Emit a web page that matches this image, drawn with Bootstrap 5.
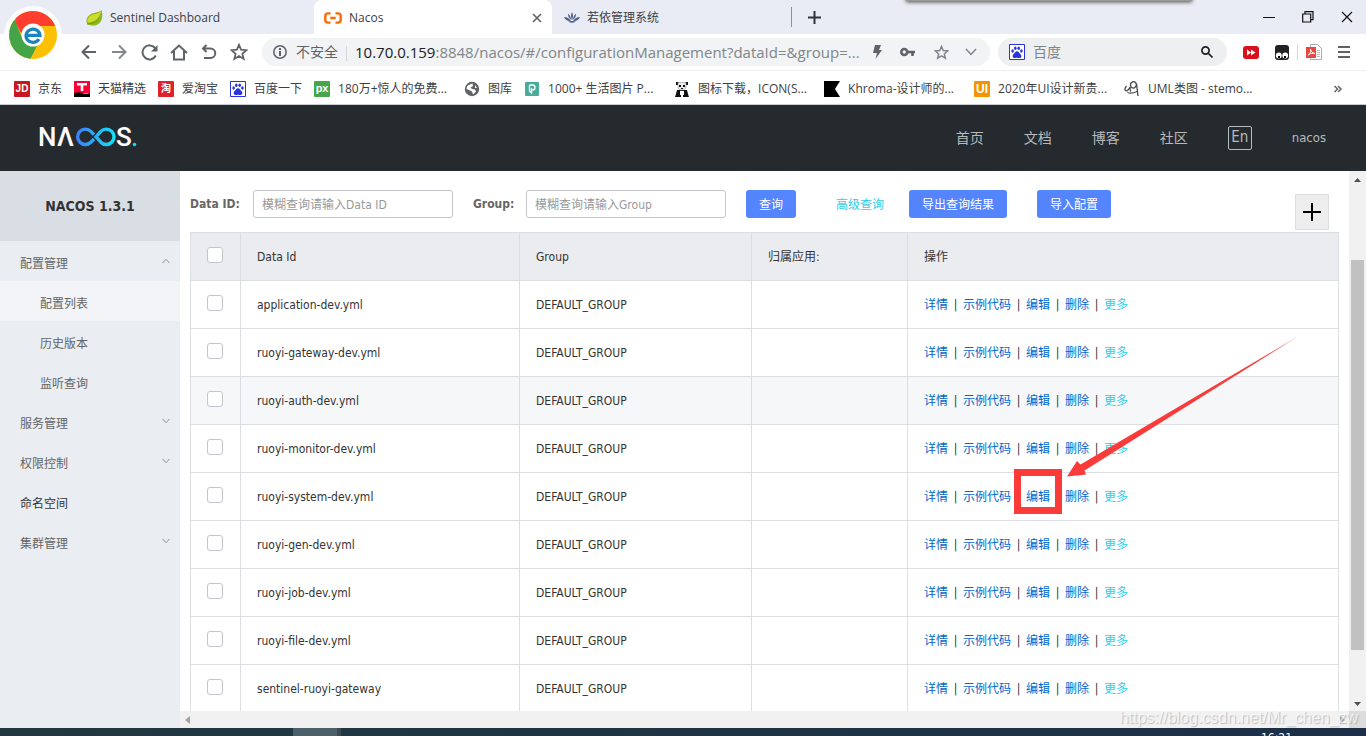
<!DOCTYPE html>
<html lang="zh-CN">
<head>
<meta charset="utf-8">
<meta name="viewport" content="width=device-width, initial-scale=1">
<title>Nacos</title>
<link href="https://cdn.jsdelivr.net/npm/bootstrap@5.3.0/dist/css/bootstrap.min.css" rel="stylesheet">
<style>
  :root { --ui: "Open Sans", "Noto Sans CJK SC", sans-serif; --page: "DejaVu Sans Condensed", "Noto Sans CJK SC", sans-serif; --line: #dcdee3; }
  body { font: 12px/18px var(--page); color: #333; background: #fff; }
  button { border: 0; background: none; padding: 0; color: inherit; }
  a { text-decoration: none; }
  svg { display: block; flex: none; }

  /* browser window */
  .browser { font-family: var(--ui); color: #3c4043; }
  .tabstrip { height: 34px; background: #e9ecf4; padding-left: 66px; }
  .tab { height: 34px; padding: 2px 10px 0 20px; gap: 7px; width: 238px; color: #3c4043; }
  .tab-first { width: 248px; }
  .tab-on { background: #fff; border-radius: 8px 8px 0 0; padding-left: 10px; }
  .tab-next { padding-left: 12px; border-right: 1px solid #8d9096; height: 20px; width: 240px; }
  .winctl { width: 39px; height: 34px; color: #111; }
  .drop { left: 906px; top: -6px; width: 286px; height: 7px; box-shadow: 0 1px 4px #444; background: #999; }
  .brand-disc { left: 4px; top: 6px; }
  .toolbar { height: 37px; padding-left: 74px; border-bottom: 1px solid #eceef1; color: #5f6368; }
  .tool { width: 30px; height: 30px; }
  .pill { height: 28px; border-radius: 14px; background: #f1f3f4; }
  .address { font-size: 15px; color: #80868b; min-width: 0; }
  .address-safe { font-size: 14px; color: #5f6368; }
  .address-host { color: #202124; }
  .websearch { width: 229px; background: #eeeff1; padding: 0 14px 0 7px; }
  .websearch input { background: none; border: 0; outline: 0; font-size: 14px; min-width: 0; padding: 0; }
  .websearch input::placeholder { color: #80868b; }
  .bookmarks { height: 33px; padding: 2px 0 0 14px; }
  .bm { gap: 8px; padding-right: 12px; color: #3c4043; white-space: nowrap; }
  .bm-long { width: 150px; }
  .bm-tile { font: bold 10px/16px "Liberation Sans", "Noto Sans CJK SC", sans-serif; width: 16px; height: 16px; color: #fff; text-align: center; flex: none; border-radius: 1px; }
  .bm-jd { background: #c81623; }
  .bm-tao { background: #e0202c; }
  .bm-px { background: #46a64a; font-size: 11px; line-height: 14px; }
  .bm-ui { background: #f59300; font-size: 12px; }

  /* console */
  .topbar { height: 67px; background: #252a2f; border-top: 1px solid #c9ccd0; padding: 0 40px 0 39px; gap: 40px; }
  .topbar a { color: #b8babc; font-size: 14px; }
  .topbar .user { font-size: 13px; }
  .lang { width: 24px; height: 24px; border: 1px solid #b8babc; border-radius: 2px; color: #b8babc; font-size: 15px; line-height: 18px; padding-bottom: 2px; }
  .sidebar { width: 180px; background: #eaedf1; flex: none; }
  .sidebar h1 { height: 70px; background: #d9dee4; font-size: 14px; font-weight: bold; color: #333; margin: 0; }
  .side-item { height: 40px; padding: 6px 10px 0 20px; color: #656565; width: 100%; }
  .side-sub { padding-left: 40px; }
  .side-on { background: #f2f4f7; }
  .side-plain { color: #333; }
  .chev { margin-bottom: 6px; }

  .content { padding: 19px 10px 0; }
  .query { height: 40px; margin-bottom: 2px; }
  .query label { font-weight: bold; color: #666; }
  .lab-id { width: 63px; }
  .lab-group { width: 53px; margin-left: 20px; }
  .query .form-control { width: 200px; height: 28px; font-size: 12px; line-height: 18px; padding: 2px 8px 0; border: 1px solid #c4c6cf; border-radius: 3px; }
  .query .form-control::placeholder { color: #999; }
  .btn-query { height: 28px; padding: 2px 13px 0; background: #5584ff; color: #fff; border-radius: 3px; font-size: 12px; line-height: 26px; }
  .btn-search { margin-left: 20px; }
  .btn-import { margin-left: 30px; }
  .more { color: #33cde5; }
  .more-query { margin: 2px 25px 0 40px; }
  .add { width: 34px; height: 36px; background: #eee; border: 1px solid #ddd; color: #000; margin-top: 4px; margin-right: 10px; }

  .grid { table-layout: fixed; width: 100%; border-collapse: collapse; }
  .grid th, .grid td { height: 48px; border: 1px solid var(--line); padding: 0 16px; font-weight: normal; white-space: nowrap; }
  .grid th { background: #ebecf0; }
  .grid .tick { text-align: center; padding: 0 2px 0 0; }
  .grid .form-check-input { width: 16px; height: 16px; margin: 0 0 4px; border: 1px solid #c4c6cf; border-radius: 3px; vertical-align: middle; background-color: #fff; }
  .grid .hovered td { background: #f5f7f9; }
  .ops a { color: #06c; }
  .ops .more { color: #33cde5; }
  .ops i { font-style: normal; display: inline-block; width: 15px; text-align: center; }
  .callout { left: 106px; top: -136px; pointer-events: none; z-index: 2; }

  .vbar { width: 17px; background: #f1f1f1; padding: 7px 0 5px; }
  .vthumb { width: 13px; height: 390px; background: #c1c1c1; margin: 78px 0 0 2px; }
  .hbar { height: 17px; background: #f1f1f1; padding: 0 4px 0 5px; }
  .hcorner { width: 17px; background: #dcdcdc; }
  .watermark { right: 8px; bottom: 0; font: 16px/20px "Liberation Sans", sans-serif; color: #ffffffb0; text-shadow: 1px 1px 1px #9999; z-index: 3; }
  .taskbar { height: 8px; background: linear-gradient(90deg, #213840, #1d2f48); color: #fff; }
  .task-on { width: 48px; background: #4d5f68; margin-left: 293px; border-right: 4px solid #3b4a52; }
  .clock { margin-right: 74px; line-height: 20px; height: 8px; }
</style>
</head>
<body class="vh-100 overflow-hidden d-flex flex-column">

<svg width="0" height="0" class="position-absolute">
  <symbol id="paw" viewBox="0 0 16 16"><path fill="#fff" stroke="#2932e1" d="M.5.5h15v15H.5z"/><g fill="#2932e1"><ellipse cx="3.600" cy="7" rx="1.300" ry="1.800"/><ellipse cx="6.300" cy="4.300" rx="1.300" ry="1.800"/><ellipse cx="9.700" cy="4.300" rx="1.300" ry="1.800"/><ellipse cx="12.400" cy="7" rx="1.300" ry="1.800"/><path d="M8 7.200c1.700 0 2.100 1.700 3.400 2.900 1.700 1.700 1 3.900-.9 3.900-1 0-1.500-.3-2.500-.3s-1.500.3-2.500.3c-1.900 0-2.600-2.200-.9-3.900C5.900 8.900 6.300 7.200 8 7.200z"/></g></symbol>
  <symbol id="star" viewBox="0 0 18 18"><path fill="none" stroke="currentColor" stroke-width="1.800" d="m9 1.800 2.100 4.900 5.300.5-4 3.500 1.200 5.200L9 13.100l-4.600 2.800 1.200-5.200-4-3.500 5.300-.5z"/></symbol>
  <symbol id="down" viewBox="0 0 8 8"><path fill="none" stroke="#8a8f99" d="m.5 2 3.500 3.700L7.500 2"/></symbol>
  <symbol id="up" viewBox="0 0 8 8"><path fill="none" stroke="#8a8f99" d="M.5 6 4 2.300 7.500 6"/></symbol>
</svg>

<header class="browser position-relative flex-shrink-0">
  <div class="tabstrip d-flex align-items-center">
    <a href="#" class="tab tab-first d-flex align-items-center">
      <svg width="17" height="16" viewBox="0 0 17 16"><path fill="#8fb81c" d="M15.500 0C14 2.500 9 2 5 4 1 6.300-.5 10 1 13.500c3.500 3 10.500 3 13.500-1.500C17 8 16.500 4 15.500 0z"/><path fill="#cfdc2c" d="M15.300 1C13 4 8 3.500 4.500 5.700 2 7.500.8 10.500 1.700 12.500c6 0 11.300-3 13.600-11.500z"/><path fill="none" stroke="#6f9a14" d="M1 14c5.500 0 10-2 12.500-6.500"/></svg>
      <span>Sentinel Dashboard</span></a>
    <a href="#" class="tab tab-on d-flex align-items-center">
      <svg width="18" height="12" viewBox="0 0 18 12" fill="none" stroke="#ff6a00" stroke-width="2.400"><path d="M6.500 1.400H4Q1.300 1.400 1.300 4v4q0 2.600 2.700 2.600h2.500M11.500 1.400H14q2.700 0 2.700 2.600v4q0 2.600-2.700 2.600h-2.500M6.300 6h5.400" /></svg>
      <span class="flex-grow-1">Nacos</span>
      <button aria-label="关闭标签"><svg width="10" height="10" viewBox="0 0 10 10" stroke="#5f6368" stroke-width="1.600"><path d="m1 1 8 8M9 1 1 9"/></svg></button></a>
    <a href="#" class="tab tab-next d-flex align-items-center">
      <svg width="16" height="12" viewBox="0 0 16 12" fill="#4f6087"><path d="M8 0q2 4 0 8-2-4 0-8zM4 1.500q3 2.500 3.400 6.500Q4 6 4 1.500zM12 1.500Q9 4 8.600 8 12 6 12 1.500zM0 5q4.500 0 7 4-5 .5-7-4zM16 5q-4.500 0-7 4 5 .5 7-4zM4 9.500q4-1 8 0-4 2.500-8 0z"/></svg>
      <span>若依管理系统</span></a>
    <button class="ms-3" aria-label="新建标签"><svg width="13" height="13" viewBox="0 0 13 13" stroke="#303236" stroke-width="2"><path d="M6.500 0v13M0 6.500h13"/></svg></button>
    <div class="ms-auto d-flex">
      <button class="winctl d-grid" aria-label="最小化"><svg class="m-auto" width="12" height="12" stroke="currentColor"><path d="M0 6.500h12"/></svg></button>
      <button class="winctl d-grid" aria-label="还原"><svg class="m-auto" width="12" height="12" fill="none" stroke="currentColor" stroke-width="1.200"><path d="M.7 3h8v8h-8zM3 3V.700h8v8H8.700"/></svg></button>
      <button class="winctl d-grid" aria-label="关闭"><svg class="m-auto" width="12" height="12" stroke="currentColor" stroke-width="1.200"><path d="m1 1 10 10M11 1 1 11"/></svg></button>
    </div>
  </div>
  <div class="drop position-absolute"></div>
  <svg class="brand-disc position-absolute" width="58" height="58" viewBox="-29 -29 58 58"><circle r="29" fill="#fbfcfe"/><circle r="24" fill="#fcc004"/><path fill="#ff3e30" d="M-17.500-16.500A24 24 0 0 1 22.200-9H0L-12-2-18-13z"/><path fill="#44a447" d="M-18.500-15.200A24 24 0 0 0-2.500 23.800L4 11 0 8-10 5z"/><circle r="11.500" fill="#fff"/><path fill="none" stroke="#1b84bd" stroke-width="3.200" d="M-6.500.3H7A7 6.600 0 1 0 6 4.200"/></svg>

  <div class="toolbar d-flex align-items-center">
    <button class="tool d-grid" aria-label="后退"><svg class="m-auto" width="16" height="16" fill="none" stroke="currentColor" stroke-width="2"><path d="M15 8H2M8 1.500 1.500 8 8 14.500"/></svg></button>
    <button class="tool d-grid" aria-label="前进"><svg class="m-auto" width="16" height="16" fill="none" stroke="#85888c" stroke-width="2"><path d="M1 8h13M8 1.500 14.500 8 8 14.500"/></svg></button>
    <button class="tool d-grid" aria-label="刷新"><svg class="m-auto" width="17" height="17" fill="none" stroke="currentColor" stroke-width="2"><path d="M14.800 11.500A7 7 0 1 1 14 4l1.500 2"/><path fill="currentColor" stroke="none" d="M16.500 1v6.500H10z"/></svg></button>
    <button class="tool d-grid" aria-label="主页"><svg class="m-auto" width="18" height="17" fill="none" stroke="currentColor" stroke-width="2"><path d="m1 9 8-7.500L17 9M4 7v8.500h10V7"/></svg></button>
    <button class="tool d-grid" aria-label="撤销"><svg class="m-auto" width="16" height="16" fill="none" stroke="currentColor" stroke-width="2"><path d="M5.500 1 2 4.500 5.500 8M2 4.500h7.500a4.700 4.700 0 0 1 0 9.500H3"/></svg></button>
    <button class="tool d-grid me-2" aria-label="收藏夹"><svg class="m-auto" width="18" height="18"><use href="#star"/></svg></button>
    <div class="pill address flex-grow-1 d-flex align-items-center">
      <svg class="mx-2" width="18" height="14" viewBox="-2 0 18 14" fill="none" stroke="#5f6368" stroke-width="1.500"><circle cx="8" cy="7" r="6.200"/><path stroke-width="2" d="M8 3v2M8 6v5"/></svg>
      <span class="address-safe">不安全</span>
      <span class="vr ms-2 me-2 my-2"></span>
      <span class="text-nowrap"><span class="address-host">10.70.0.159</span>:8848/nacos/#/configurationManagement?dataId=&amp;group=...</span>
      <div class="ms-auto d-flex align-items-center">
        <button class="tool d-grid" aria-label="闪电"><svg class="m-auto" width="10" height="14" fill="#5f6368"><path d="M3 0h6L7 5h3L3.500 14 5 8H1z"/></svg></button>
        <button class="tool d-grid" aria-label="密码"><svg class="m-auto" width="15" height="10"><path fill="none" stroke="#5f6368" stroke-width="2.600" d="M7.300 5A3 3 0 1 1 1.300 5a3 3 0 0 1 6 0zH15M12.500 5v4"/></svg></button>
        <button class="tool ms-1 d-grid" aria-label="收藏"><svg class="m-auto" width="15" height="15"><use href="#star"/></svg></button>
        <button class="tool me-1 d-grid" aria-label="展开"><svg class="m-auto" width="12" height="8" fill="none" stroke="#80868b" stroke-width="1.500"><path d="m1 1 5 5.500L11 1"/></svg></button>
      </div>
    </div>
    <label class="pill websearch ms-2 d-flex align-items-center">
      <svg class="mx-1" width="16" height="16"><use href="#paw"/></svg>
      <input class="flex-grow-1 ms-1" type="text" placeholder="百度" aria-label="搜索">
      <svg width="12" height="12" fill="none" stroke="#202124" stroke-width="1.700"><circle cx="4.500" cy="4.500" r="3.600"/><path d="m7 7 4.500 4.500"/></svg>
    </label>
    <div class="d-flex align-items-center px-3">
      <svg width="16" height="13"><rect width="16" height="13" rx="3" fill="#d8111b"/><path fill="#fff" d="m4 3.500 4 3-4 3zM8 3.500l4.500 3-4.500 3z"/></svg>
      <svg class="ms-3" width="14" height="15"><rect width="14" height="15" rx="3" fill="#222"/><circle cx="3.800" cy="10.500" r="2.900" fill="#fff"/><circle cx="10.200" cy="10.500" r="2.900" fill="#fff"/><path d="M3 11h2v2H3zM9 11h2v2H9z"/></svg>
      <span class="vr ms-2 me-2"></span>
      <svg width="16" height="16"><path fill="#fff" stroke="#aaa" d="M4.500.5h7l4 4v11h-11z"/><path stroke="#bbb" d="M11 6.500h3M11 8.500h3M11 10.500h3M11 12.500h3"/><path fill="#e9473f" d="M0 3h10v11H0z"/><path fill="none" stroke="#fff" d="M2 11c3-2 3-4 2.500-6C4.500 7 6 9 9 9.500 6 9 4 9.500 2 11z"/></svg>
      <button class="ms-3" aria-label="菜单"><svg width="12" height="12" stroke="#5f6368" stroke-width="2"><path d="M0 1h12M0 6h12M0 11h12"/></svg></button>
    </div>
  </div>

  <nav class="bookmarks d-flex align-items-center" aria-label="书签栏">
    <a href="#" class="bm d-flex align-items-center"><span class="bm-tile bm-jd">JD</span>京东</a>
    <a href="#" class="bm d-flex align-items-center"><svg width="16" height="16"><path fill="#ff0036" d="M0 0h16v12H0z"/><path d="M0 12q4-1.500 8 0 4 1.500 8 0v4H0z"/><path fill="#fff" d="M3 2h10v2.500H9.300V10H6.700V4.500H3z"/></svg>天猫精选</a>
    <a href="#" class="bm d-flex align-items-center"><span class="bm-tile bm-tao">淘</span>爱淘宝</a>
    <a href="#" class="bm d-flex align-items-center"><svg width="16" height="16"><use href="#paw"/></svg>百度一下</a>
    <a href="#" class="bm bm-long d-flex align-items-center"><span class="bm-tile bm-px">px</span>180万+惊人的免费...</a>
    <a href="#" class="bm d-flex align-items-center"><svg width="16" height="16"><circle cx="8" cy="8" r="7.200" fill="#5f6368"/><path fill="#fff" d="M3 5.500c2-2.500 4-2 5.500-3L9 5 6.500 6.500 8 8l3 .5 1 2-3 3-1-3-3-1.500L2.500 8zM11 4l2 3h-2z"/></svg>图库</a>
    <a href="#" class="bm bm-long d-flex align-items-center"><svg width="16" height="16"><rect x="1" y="1" width="14" height="14" rx="1" fill="#4aab9b"/><path fill="none" stroke="#fff" stroke-width="1.300" d="M5.500 4H9q2 0 2 2.500T9 9H8M5.500 4v6l2 2V7"/></svg>1000+ 生活图片 P...</a>
    <a href="#" class="bm bm-long d-flex align-items-center"><svg width="16" height="16"><path fill="#111" d="M2 1h3v3H2zM11 1h3v3h-3zM3 9h10l1 4 1 3H9v-2H7v2H1l1-3z"/><path fill="#e9e9e6" stroke="#888" stroke-width=".5" d="M4 1.500h8V7l-2 2H6L4 7z"/><path fill="#111" d="M5 4h2v2H5zM9 4h2v2H9zM7 7h2v1H7z"/><path fill="#fff" d="M6 10h4v4H6z"/></svg>图标下载，ICON(S...</a>
    <a href="#" class="bm bm-long d-flex align-items-center"><svg width="16" height="16"><path d="M0 0h16l-5 8 5 8H0z"/></svg>Khroma-设计师的...</a>
    <a href="#" class="bm bm-long d-flex align-items-center"><span class="bm-tile bm-ui">UI</span>2020年UI设计新贵...</a>
    <a href="#" class="bm bm-long d-flex align-items-center"><svg width="16" height="16" fill="none" stroke="#4a4a4a" stroke-width="1.300"><path d="M2.500 5Q0 8 1.500 9.500 3.500 11 6 6q0 4 1 4.500M12.500 4Q12 .7 9.500.7 6.500 1 6.500 4q.5 3.500 3.500 3Q12.500 6 12.500 2.500L14 15M3.500 11.500q4 1.500 9.500-1"/></svg>UML类图 - stemo...</a>
    <button class="ms-auto me-4" aria-label="更多书签"><svg width="8" height="8" fill="none" stroke="#5f6368" stroke-width="1.500"><path d="m.5 1 3 3-3 3M4 1l3 3-3 3"/></svg></button>
  </nav>
</header>

<nav class="topbar d-flex align-items-center flex-shrink-0">
  <a href="#" class="me-auto" aria-label="NACOS">
    <svg width="100" height="40" viewBox="0 -8 100 40" font-family="Roboto, sans-serif" font-size="26" font-weight="500" fill="#fff">
      <defs><linearGradient id="inf" gradientUnits="userSpaceOnUse" x1="37" x2="76"><stop stop-color="#3f7dfa"/><stop offset="1" stop-color="#13e3f5"/></linearGradient></defs>
      <text x="-1" y="20">N</text><text x="18" y="20">Λ</text>
      <path fill="none" stroke="url(#inf)" stroke-width="3.400" d="M55 8.600 51.800 5.400A7.700 7.700 0 1 0 51.800 16.200L55 13M57 10.800 61.800 5.400A7.700 7.700 0 1 1 61.800 16.200z"/>
      <text x="77" y="20">S</text><circle cx="95.500" cy="18.500" r="1.700" fill="#13e3f5"/>
    </svg></a>
  <a href="#">首页</a><a href="#">文档</a><a href="#">博客</a><a href="#">社区</a>
  <button class="lang">En</button>
  <a href="#" class="user">nacos</a>
</nav>

<div class="d-flex flex-grow-1 overflow-hidden">
  <aside class="sidebar">
    <h1 class="d-flex align-items-center justify-content-center">NACOS 1.3.1</h1>
    <a href="#" class="side-item d-flex align-items-center justify-content-between">配置管理<svg class="chev" width="8" height="8"><use href="#up"/></svg></a>
    <a href="#" class="side-item side-sub side-on d-flex align-items-center">配置列表</a>
    <a href="#" class="side-item side-sub d-flex align-items-center">历史版本</a>
    <a href="#" class="side-item side-sub d-flex align-items-center">监听查询</a>
    <a href="#" class="side-item d-flex align-items-center justify-content-between">服务管理<svg class="chev" width="8" height="8"><use href="#down"/></svg></a>
    <a href="#" class="side-item d-flex align-items-center justify-content-between">权限控制<svg class="chev" width="8" height="8"><use href="#down"/></svg></a>
    <a href="#" class="side-item side-plain d-flex align-items-center">命名空间</a>
    <a href="#" class="side-item d-flex align-items-center justify-content-between">集群管理<svg class="chev" width="8" height="8"><use href="#down"/></svg></a>
  </aside>

  <div class="d-flex flex-column flex-grow-1 position-relative overflow-hidden">
    <div class="d-flex flex-grow-1 overflow-hidden">
      <main class="content flex-grow-1 overflow-hidden">
        <form class="query d-flex align-items-start">
          <div class="d-flex align-items-center">
            <label class="lab-id" for="dataId">Data ID:</label>
            <input id="dataId" class="form-control" type="text" placeholder="模糊查询请输入Data ID">
            <label class="lab-group" for="group">Group:</label>
            <input id="group" class="form-control" type="text" placeholder="模糊查询请输入Group">
            <button type="button" class="btn-query btn-search">查询</button>
            <a href="#" class="more more-query">高级查询</a>
            <button type="button" class="btn-query">导出查询结果</button>
            <button type="button" class="btn-query btn-import">导入配置</button>
          </div>
          <button type="button" class="add ms-auto d-grid" aria-label="新建配置"><svg class="m-auto" width="18" height="18" stroke="currentColor" stroke-width="2"><path d="M9 0v18M0 9h18"/></svg></button>
        </form>

        <table class="grid">
          <colgroup><col style="width:50px"><col style="width:279px"><col style="width:232px"><col style="width:156px"><col></colgroup>
          <thead>
            <tr><th class="tick"><input class="form-check-input" type="checkbox" aria-label="全选"></th><th>Data Id</th><th>Group</th><th>归属应用:</th><th>操作</th></tr>
          </thead>
          <tbody>
            <tr><td class="tick"><input class="form-check-input" type="checkbox" aria-label="application-dev.yml"></td><td>application-dev.yml</td><td>DEFAULT_GROUP</td><td></td><td class="ops"><a href="#">详情</a><i>|</i><a href="#">示例代码</a><i>|</i><a href="#">编辑</a><i>|</i><a href="#">删除</a><i>|</i><a href="#" class="more">更多</a></td></tr>
            <tr><td class="tick"><input class="form-check-input" type="checkbox" aria-label="ruoyi-gateway-dev.yml"></td><td>ruoyi-gateway-dev.yml</td><td>DEFAULT_GROUP</td><td></td><td class="ops"><a href="#">详情</a><i>|</i><a href="#">示例代码</a><i>|</i><a href="#">编辑</a><i>|</i><a href="#">删除</a><i>|</i><a href="#" class="more">更多</a></td></tr>
            <tr class="hovered"><td class="tick"><input class="form-check-input" type="checkbox" aria-label="ruoyi-auth-dev.yml"></td><td>ruoyi-auth-dev.yml</td><td>DEFAULT_GROUP</td><td></td><td class="ops"><a href="#">详情</a><i>|</i><a href="#">示例代码</a><i>|</i><a href="#">编辑</a><i>|</i><a href="#">删除</a><i>|</i><a href="#" class="more">更多</a></td></tr>
            <tr><td class="tick"><input class="form-check-input" type="checkbox" aria-label="ruoyi-monitor-dev.yml"></td><td>ruoyi-monitor-dev.yml</td><td>DEFAULT_GROUP</td><td></td><td class="ops"><a href="#">详情</a><i>|</i><a href="#">示例代码</a><i>|</i><a href="#">编辑</a><i>|</i><a href="#">删除</a><i>|</i><a href="#" class="more">更多</a></td></tr>
            <tr><td class="tick"><input class="form-check-input" type="checkbox" aria-label="ruoyi-system-dev.yml"></td><td>ruoyi-system-dev.yml</td><td>DEFAULT_GROUP</td><td></td><td class="ops position-relative"><a href="#">详情</a><i>|</i><a href="#">示例代码</a><i>|</i><a href="#">编辑</a><i>|</i><a href="#">删除</a><i>|</i><a href="#" class="more">更多</a>
              <svg class="callout position-absolute" width="284" height="178"><path fill="none" stroke="#fb3a3a" stroke-width="7" d="M3.500 135.500h41v38h-41z"/><path fill="#fb3a3a" d="m53 139.500 10-15.500 3.500 3.500L283 0 70.500 133.500l1.500 4z"/></svg></td></tr>
            <tr><td class="tick"><input class="form-check-input" type="checkbox" aria-label="ruoyi-gen-dev.yml"></td><td>ruoyi-gen-dev.yml</td><td>DEFAULT_GROUP</td><td></td><td class="ops"><a href="#">详情</a><i>|</i><a href="#">示例代码</a><i>|</i><a href="#">编辑</a><i>|</i><a href="#">删除</a><i>|</i><a href="#" class="more">更多</a></td></tr>
            <tr><td class="tick"><input class="form-check-input" type="checkbox" aria-label="ruoyi-job-dev.yml"></td><td>ruoyi-job-dev.yml</td><td>DEFAULT_GROUP</td><td></td><td class="ops"><a href="#">详情</a><i>|</i><a href="#">示例代码</a><i>|</i><a href="#">编辑</a><i>|</i><a href="#">删除</a><i>|</i><a href="#" class="more">更多</a></td></tr>
            <tr><td class="tick"><input class="form-check-input" type="checkbox" aria-label="ruoyi-file-dev.yml"></td><td>ruoyi-file-dev.yml</td><td>DEFAULT_GROUP</td><td></td><td class="ops"><a href="#">详情</a><i>|</i><a href="#">示例代码</a><i>|</i><a href="#">编辑</a><i>|</i><a href="#">删除</a><i>|</i><a href="#" class="more">更多</a></td></tr>
            <tr><td class="tick"><input class="form-check-input" type="checkbox" aria-label="sentinel-ruoyi-gateway"></td><td>sentinel-ruoyi-gateway</td><td>DEFAULT_GROUP</td><td></td><td class="ops"><a href="#">详情</a><i>|</i><a href="#">示例代码</a><i>|</i><a href="#">编辑</a><i>|</i><a href="#">删除</a><i>|</i><a href="#" class="more">更多</a></td></tr>
          </tbody>
        </table>
      </main>
      <div class="vbar d-flex flex-column flex-shrink-0">
        <svg class="mx-auto" width="7" height="4"><path fill="#505050" d="m3.500 0 3.500 4H0z"/></svg>
        <div class="vthumb"></div>
        <svg class="mx-auto mt-auto" width="7" height="4"><path fill="#505050" d="M0 0h7L3.500 4z"/></svg>
      </div>
    </div>
    <div class="d-flex flex-shrink-0">
      <div class="hbar flex-grow-1 d-flex align-items-center justify-content-between">
        <svg width="5" height="8"><path fill="#a3a3a3" d="M5 0v8L0 4z"/></svg>
        <svg width="5" height="8"><path fill="#a3a3a3" d="m0 0 5 4-5 4z"/></svg>
      </div>
      <div class="hcorner"></div>
    </div>
    <span class="watermark position-absolute">https://blog.csdn.net/Mr_chen_zw</span>
  </div>
</div>

<footer class="taskbar d-flex flex-shrink-0 justify-content-between overflow-hidden">
  <div class="task-on"></div>
  <span class="clock">16:21</span>
</footer>

<script src="https://cdn.jsdelivr.net/npm/bootstrap@5.3.0/dist/js/bootstrap.bundle.min.js"></script>
</body>
</html>
